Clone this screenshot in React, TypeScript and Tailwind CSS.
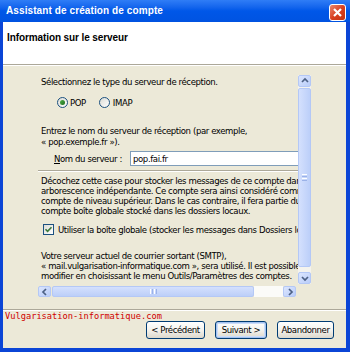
import React from "react";

const sans = "font-['DejaVu_Sans_Condensed','Liberation_Sans',Arial,sans-serif]";
const bold = "font-['Liberation_Sans',Arial,sans-serif]";

function Chevron({ dir }: { dir: "up" | "down" | "left" | "right" }) {
  const paths: Record<string, string> = {
    up: "M2 6 L5 3 L8 6",
    down: "M2 4 L5 7 L8 4",
    left: "M6 2 L3 5 L6 8",
    right: "M4 2 L7 5 L4 8",
  };
  return (
    <svg width="10" height="10" viewBox="0 0 10 10">
      <path d={paths[dir]} fill="none" stroke="#4D6185" strokeWidth="1.7" />
    </svg>
  );
}

function ArrowBtn({ dir, className }: { dir: "up" | "down" | "left" | "right"; className: string }) {
  return (
    <div
      className={
        "flex items-center justify-center rounded-[2px] border border-[#B4C8F6] bg-gradient-to-br from-[#DCE6FE] to-[#B9CDF9] " +
        className
      }
    >
      <Chevron dir={dir} />
    </div>
  );
}

function Line({ children }: { children: React.ReactNode }) {
  return <div className="whitespace-nowrap">{children}</div>;
}

function Radio({ checked }: { checked?: boolean }) {
  return (
    <div className="w-[11px] h-[11px] rounded-full border border-[#1C5180] bg-gradient-to-br from-[#DCDCD5] to-white flex items-center justify-center shrink-0">
      {checked && <div className="w-[5px] h-[5px] rounded-full bg-gradient-to-br from-[#4FB04A] to-[#1E6E1E]" />}
    </div>
  );
}

function Button({ label, w, def }: { label: string; w: string; def?: boolean }) {
  return (
    <div
      className={
        "h-[18px] rounded-[3px] border border-[#003C74] bg-gradient-to-b from-white via-[#F4F3EE] to-[#DCD8CC] flex items-center justify-center text-black text-[9.5px] tracking-[-0.4px] " +
        w +
        (def ? " shadow-[inset_0_0_0_1px_#A4C2F0,inset_0_0_0_2px_#CBDDF8]" : "")
      }
    >
      {label}
    </div>
  );
}

export default function App() {
  return (
    <div className={"w-[350px] h-[352px] bg-[#0B45D6] flex flex-col overflow-hidden " + sans}>
      {/* Title bar */}
      <div className="h-[22px] shrink-0 flex items-start justify-between pl-[6px] pr-[4px] bg-gradient-to-b from-[#2F7DF6] via-[#0057E8] to-[#0053E1]">
        <span className={"pt-[5px] text-white font-bold text-[10px] tracking-[0.1px] leading-[11px] " + bold}>
          Assistant de création de compte
        </span>
        <div className="mt-[4px] w-[17px] h-[17px] rounded-[3px] border border-white bg-gradient-to-br from-[#E9866C] via-[#D9401F] to-[#C23210] flex items-center justify-center">
          <svg width="11" height="11" viewBox="0 0 11 11">
            <path d="M2 2 L9 9 M9 2 L2 9" stroke="white" strokeWidth="2.2" />
          </svg>
        </div>
      </div>

      {/* Window body */}
      <div className="flex-1 flex flex-col ml-[3px] mr-[4px] mb-[4px] bg-[#ECE9D8]">
        {/* Header */}
        <div className="h-[42px] shrink-0 bg-white pl-[4px] pt-[10px]">
          <div className={"font-bold text-black text-[10px] tracking-[-0.1px] leading-[11px] " + bold}>
            Information sur le serveur
          </div>
        </div>
        <div className="h-px bg-[#ACA899]" />
        <div className="h-px bg-white" />

        {/* Main content */}
        <div className="pt-[9px] pl-[35px] flex">
          <div className="w-[260px] flex flex-col">
            <div className="h-[211px] overflow-hidden pl-[3px] pt-[1px] text-black text-[9.5px] tracking-[-0.4px] leading-[11px]">
              <Line>Sélectionnez le type du serveur de réception.</Line>

              <div className="mt-[9px] h-[12px] flex items-center pl-[16px]">
                <Radio checked />
                <span className="ml-[2px]">POP</span>
                <div className="ml-[13px]">
                  <Radio />
                </div>
                <span className="ml-[3px]">IMAP</span>
              </div>

              <div className="mt-[17px]">
                <Line>Entrez le nom du serveur de réception (par exemple,</Line>
                <Line>« pop.exemple.fr »).</Line>
              </div>

              <div className="mt-[4px] h-[15px] flex items-center">
                <div className="ml-[13px] w-[76px] shrink-0 whitespace-nowrap">
                  <span className="underline">N</span>om du serveur :
                </div>
                <div className="h-[15px] w-[220px] shrink-0 border border-[#7F9DB9] bg-white pl-[2px] flex items-center whitespace-nowrap">
                  pop.fai.fr
                </div>
              </div>

              <div className="mt-[4px] -ml-[3px] h-px bg-[#ACA899]" />
              <div className="-ml-[3px] h-px bg-white" />

              <div className="mt-[4px] leading-[10px]">
                <Line>Décochez cette case pour stocker les messages de ce compte dans une</Line>
                <Line>arborescence indépendante. Ce compte sera ainsi considéré comme un</Line>
                <Line>compte de niveau supérieur. Dans le cas contraire, il fera partie du</Line>
                <Line>compte boîte globale stocké dans les dossiers locaux.</Line>
              </div>

              <div className="mt-[8px] h-[11px] flex items-center pl-[2px]">
                <div className="w-[11px] h-[11px] shrink-0 border border-[#1C5180] bg-gradient-to-br from-[#DCDCD5] to-white flex items-center justify-center">
                  <svg width="9" height="9" viewBox="0 0 9 9">
                    <path d="M1.5 4.2 L3.6 6.3 L7.5 2.2" fill="none" stroke="#3C7A3C" strokeWidth="1.6" />
                  </svg>
                </div>
                <span className="ml-[4px] whitespace-nowrap">
                  Utiliser la boîte globale (stocker les messages dans Dossiers locaux)
                </span>
              </div>

              <div className="mt-[16px] leading-[10px]">
                <Line>Votre serveur actuel de courrier sortant (SMTP),</Line>
                <Line>« mail.vulgarisation-informatique.com », sera utilisé. Il est possible de le</Line>
                <Line>modifier en choisissant le menu Outils/Paramètres des comptes.</Line>
              </div>
            </div>

            {/* Horizontal scrollbar */}
            <div className="h-[11px] flex">
              <ArrowBtn dir="left" className="w-[13px] h-[11px]" />
              <div className="w-[202px] h-[11px] ml-px rounded-[2px] border border-[#B4C8F6] bg-gradient-to-b from-[#D4E0FD] to-[#BCCFF9] flex items-center justify-center gap-[1px]">
                <div className="w-px h-[5px] bg-white" />
                <div className="w-px h-[5px] bg-[#9BB2E8]" />
                <div className="w-px h-[5px] bg-white" />
                <div className="w-px h-[5px] bg-[#9BB2E8]" />
              </div>
              <div className="w-[29px] h-[11px] bg-[#FBFBF8]" />
              <ArrowBtn dir="right" className="w-[13px] h-[11px]" />
            </div>
          </div>

          {/* Vertical scrollbar */}
          <div className="w-[13px] h-[209px] flex flex-col bg-[#F4F3EE]">
            <ArrowBtn dir="up" className="w-[13px] h-[12px]" />
            <div className="h-[179px] mt-px rounded-[2px] border border-[#B4C8F6] bg-gradient-to-r from-[#D4E0FD] to-[#BCCFF9] flex flex-col items-center justify-center gap-[1px]">
              <div className="w-[5px] h-px bg-white" />
              <div className="w-[5px] h-px bg-[#9BB2E8]" />
              <div className="w-[5px] h-px bg-white" />
              <div className="w-[5px] h-px bg-[#9BB2E8]" />
            </div>
            <div className="flex-1" />
            <ArrowBtn dir="down" className="w-[13px] h-[12px]" />
          </div>
        </div>

        {/* Footer separator */}
        <div className="mt-[12px] h-px bg-[#ACA899]" />
        <div className="h-px bg-white" />

        <div className="h-[10px] pl-[2px] font-['DejaVu_Sans_Mono',monospace] text-[8.7px] leading-[10px] text-[#D00000] whitespace-nowrap">
          Vulgarisation-informatique.com
        </div>

        <div className="h-[18px] flex justify-end gap-[10px] pr-[12px]">
          <Button label="< Précédent" w="w-[59px]" />
          <Button label="Suivant >" w="w-[52px]" def />
          <Button label="Abandonner" w="w-[57px]" />
        </div>
      </div>
    </div>
  );
}
